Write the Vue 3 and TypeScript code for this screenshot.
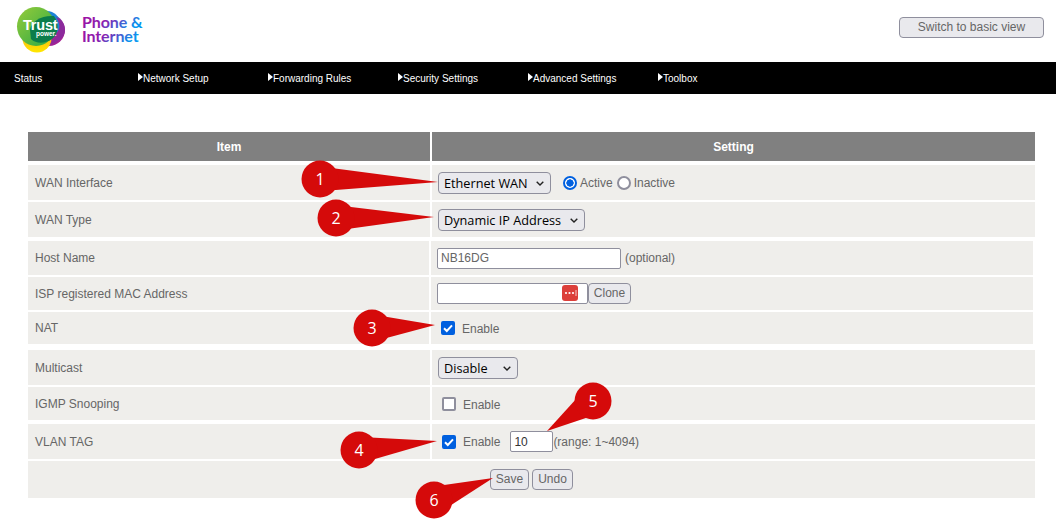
<script setup lang="ts">
interface Callout { n: number; cx: number; cy: number; tx: number; ty: number }
const callouts: Callout[] = [
  { n: 1, cx: 320, cy: 179, tx: 438, ty: 182 },
  { n: 2, cx: 336, cy: 218, tx: 434, ty: 217 },
  { n: 3, cx: 372, cy: 328, tx: 435, ty: 325 },
  { n: 4, cx: 359, cy: 450, tx: 437, ty: 441 },
  { n: 5, cx: 593, cy: 401, tx: 547, ty: 431 },
  { n: 6, cx: 434, cy: 500, tx: 493, ty: 478 },
]
function tail(c: Callout): string {
  const dx = c.tx - c.cx
  const dy = c.ty - c.cy
  const len = Math.hypot(dx, dy)
  const ux = dx / len
  const uy = dy / len
  const bx = c.cx + ux * 13
  const by = c.cy + uy * 13
  const w = 11
  return `${c.tx},${c.ty} ${bx - uy * w},${by + ux * w} ${bx + uy * w},${by - ux * w}`
}
const navItems = ['Network Setup', 'Forwarding Rules', 'Security Settings', 'Advanced Settings', 'Toolbox']
</script>

<template>
  <div class="page">
    <header class="top">
      <svg class="logo" width="150" height="54" viewBox="0 0 150 54">
        <defs>
          <linearGradient id="yel" x1="0" y1="0" x2="0" y2="1"><stop offset="0" stop-color="#f7941d" /><stop offset="1" stop-color="#ffe800" /></linearGradient>
          <linearGradient id="pur" x1="0" y1="0" x2="1" y2="1"><stop offset="0" stop-color="#4b3fb0" /><stop offset="1" stop-color="#b81c8c" /></linearGradient>
          <linearGradient id="grn" x1="0" y1="0" x2="1" y2="1"><stop offset="0" stop-color="#96cc3a" /><stop offset="1" stop-color="#2aa745" /></linearGradient>
          <linearGradient id="wrd" x1="0" y1="0" x2="1" y2="0.4"><stop offset="0" stop-color="#a30fa0" /><stop offset="0.5" stop-color="#8a1fb0" /><stop offset="1" stop-color="#0a96f0" /></linearGradient>
        </defs>
        <circle cx="49" cy="27" r="16" fill="url(#pur)" />
        <circle cx="37" cy="35" r="14.5" fill="url(#yel)" />
        <circle cx="47" cy="21" r="13" fill="#1b83d6" />
        <ellipse cx="36" cy="23.5" rx="19" ry="19.5" fill="url(#grn)" />
        <path d="M30 27 C31 18 42 12 54 13 C59 20 59 31 52 36 C45 41 36 41 31 36 Z" fill="#0c7d4b" />
        <path d="M56 14 C62 22 60 33 52 39 L50 41 C58 40 65 34 65 27 C65 21 61 16 56 14 Z" fill="#8c2a9c" />
        <text x="23" y="27" class="trust">Trust</text>
        <text x="36" y="33" class="power">power.</text>
        <text x="82" y="25" class="word" fill="url(#wrd)">Phone &amp;</text>
        <text x="82" y="39" class="word" fill="url(#wrd)">Internet</text>
      </svg>
      <button class="btn switch" type="button">Switch to basic view</button>
    </header>

    <nav class="nav">
      <span class="nav-status">Status</span>
      <span v-for="item in navItems" :key="item" class="nav-item"><i class="arrow"></i>{{ item }}</span>
    </nav>

    <section class="table">
      <div class="row head">
        <div class="c1">Item</div>
        <div class="c2">Setting</div>
      </div>

      <div class="row r-iface">
        <div class="c1">WAN Interface</div>
        <div class="c2">
          <label class="sel w-iface">
            <select><option>Ethernet WAN</option></select>
            <svg class="chev" width="8" height="5" viewBox="0 0 8 5"><path d="M.7.7L4 4l3.3-3.3" /></svg>
          </label>
          <span class="radio on"></span><span class="t-active">Active</span>
          <span class="radio second"></span><span class="t-active">Inactive</span>
        </div>
      </div>

      <div class="row r-type">
        <div class="c1">WAN Type</div>
        <div class="c2">
          <label class="sel w-type">
            <select><option>Dynamic IP Address</option></select>
            <svg class="chev" width="8" height="5" viewBox="0 0 8 5"><path d="M.7.7L4 4l3.3-3.3" /></svg>
          </label>
        </div>
      </div>

      <div class="row narrow r-host">
        <div class="c1">Host Name</div>
        <div class="c2">
          <input class="inp w-host" value="NB16DG" />
          <span class="after">(optional)</span>
        </div>
      </div>

      <div class="row narrow r-mac">
        <div class="c1">ISP registered MAC Address</div>
        <div class="c2">
          <div class="mac">
            <input class="inp w-mac" />
            <svg class="dots" width="16" height="16" viewBox="0 0 16 16">
              <rect width="16" height="16" rx="3" fill="#dc3f3a" />
              <circle cx="4" cy="8" r="1.1" fill="#fff" />
              <circle cx="7.5" cy="8" r="1.1" fill="#fff" />
              <circle cx="11" cy="8" r="1.1" fill="#fff" />
              <rect x="13.5" y="5" width="1" height="6" fill="#f6c9c7" />
            </svg>
          </div>
          <button class="btn clone" type="button">Clone</button>
        </div>
      </div>

      <div class="row narrow r-nat">
        <div class="c1">NAT</div>
        <div class="c2 chk-cell">
          <span class="check on">
            <svg width="14" height="14" viewBox="0 0 14 14"><path d="M3 7.2l2.8 2.8L11 4.4" /></svg>
          </span>
          <span class="chk-label nudge">Enable</span>
        </div>
      </div>

      <div class="row r-mcast">
        <div class="c1">Multicast</div>
        <div class="c2">
          <label class="sel w-mcast">
            <select><option>Disable</option></select>
            <svg class="chev" width="8" height="5" viewBox="0 0 8 5"><path d="M.7.7L4 4l3.3-3.3" /></svg>
          </label>
        </div>
      </div>

      <div class="row r-igmp">
        <div class="c1">IGMP Snooping</div>
        <div class="c2 chk-cell">
          <span class="check"></span>
          <span class="chk-label nudge">Enable</span>
        </div>
      </div>

      <div class="row r-vlan">
        <div class="c1">VLAN TAG</div>
        <div class="c2 chk-cell">
          <span class="check on">
            <svg width="14" height="14" viewBox="0 0 14 14"><path d="M3 7.2l2.8 2.8L11 4.4" /></svg>
          </span>
          <span class="chk-label">Enable</span>
          <input class="inp w-vlan" value="10" />
          <span class="after-tight">(range: 1~4094)</span>
        </div>
      </div>

      <div class="row r-save">
        <button class="btn save" type="button">Save</button>
        <button class="btn undo" type="button">Undo</button>
      </div>
    </section>

    <svg class="callouts" width="1056" height="519" viewBox="0 0 1056 519">
      <g v-for="c in callouts" :key="c.n">
        <polygon :points="tail(c)" fill="#d50a0a" />
        <circle :cx="c.cx" :cy="c.cy" r="18.5" fill="#d50a0a" />
        <text :x="c.cx" :y="c.cy + 6" text-anchor="middle" class="num">{{ c.n }}</text>
      </g>
    </svg>
  </div>
</template>

<style>
html, body { margin: 0; background: #fff; overflow: hidden; }
</style>

<style scoped>
.page {
  position: relative;
  width: 1056px;
  height: 519px;
  overflow: hidden;
  background: #fff;
  font-family: "Liberation Sans", Arial, sans-serif;
  font-size: 12px;
  color: #666;
}
.top {
  height: 62px;
  display: flex;
  justify-content: space-between;
  align-items: flex-start;
}
.logo { display: block; margin-top: 3px; }
.trust { font: 700 14.5px "Liberation Sans", sans-serif; fill: #fff; letter-spacing: -0.2px; }
.power { font: 700 6.5px "Liberation Sans", sans-serif; fill: #fff; }
.word { font: 700 16px "Lato", sans-serif; letter-spacing: -0.1px; }
.btn {
  box-sizing: border-box;
  height: 21px;
  padding: 0 0 2px;
  background: #e9e9ed;
  border: 1px solid #8f8f9d;
  border-radius: 4px;
  font: 12px "Liberation Sans", Arial, sans-serif;
  color: #666;
  text-align: center;
}
.switch { width: 145px; margin: 17px 12px 0 0; }

.nav {
  height: 32px;
  background: #000;
  color: #fff;
  font-size: 10px;
  display: flex;
  align-items: center;
}
.nav-status { width: 124px; padding-left: 14px; box-sizing: content-box; }
.nav-item { width: 130px; display: flex; align-items: center; }
.arrow {
  width: 0;
  height: 0;
  border-left: 5px solid #fff;
  border-top: 4px solid transparent;
  border-bottom: 4px solid transparent;
  margin-top: -2px;
}

.table { margin: 38px 0 0 28px; width: 1007px; display: flex; flex-direction: column; }
.row { display: flex; gap: 2px; }
.row.narrow { width: 1005px; }
.c1 {
  width: 402px;
  box-sizing: border-box;
  padding-left: 7px;
  background: #efeeeb;
  display: flex;
  align-items: center;
  flex: none;
}
.c2 {
  flex: 1;
  box-sizing: border-box;
  padding-left: 6px;
  background: #efeeeb;
  display: flex;
  align-items: center;
}
.narrow .c1 { width: 401px; }
.head { height: 29px; font-weight: 700; color: #fff; }
.head .c1, .head .c2 { background: #808080; justify-content: center; padding: 0; }

.r-iface { height: 35px; margin-top: 4px; }
.r-type { height: 35px; margin-top: 2px; }
.r-host { height: 34px; margin-top: 4px; }
.r-mac { height: 33px; margin-top: 2px; }
.r-nat { height: 32px; margin-top: 2px; }
.r-mcast { height: 35px; margin-top: 6px; }
.r-igmp { height: 33px; margin-top: 2px; }
.r-vlan { height: 35px; margin-top: 4px; }
.r-save {
  height: 37px;
  margin-top: 2px;
  background: #efeeeb;
  align-items: center;
  padding-left: 462px;
  gap: 3px;
}

.sel { position: relative; display: block; height: 22px; flex: none; }
.sel select {
  appearance: none;
  box-sizing: border-box;
  width: 100%;
  height: 22px;
  margin: 0;
  padding: 1px 0 0 5px;
  background: #e9e9ed;
  border: 1px solid #8f8f9d;
  border-radius: 4px;
  font: 12.7px "Open Sans", sans-serif;
  color: #000;
}
.chev { position: absolute; top: 9px; right: 7px; }
.chev path { fill: none; stroke: #222; stroke-width: 1.4; }
.w-iface { width: 113px; }
.w-type { width: 147px; }
.w-mcast { width: 80px; }

.radio {
  box-sizing: border-box;
  width: 14px;
  height: 14px;
  border-radius: 50%;
  border: 2px solid #8f8f9d;
  background: #fff;
  margin-left: 12px;
  flex: none;
}
.radio.on { border-color: #0060df; background: radial-gradient(circle, #0060df 0 3.4px, #fff 3.9px); }
.radio.second { margin-left: 4px; }
.t-active { margin-left: 3px; }

.inp {
  box-sizing: border-box;
  height: 21px;
  margin: 0;
  padding: 0 3px;
  background: #fff;
  border: 1px solid #8f8f9d;
  border-radius: 2px;
  font: 12px "Liberation Sans", Arial, sans-serif;
  color: #666;
  outline: none;
}
.w-host { width: 184px; }
.w-mac { width: 151px; display: block; }
.w-vlan { width: 43px; margin-left: 10px; color: #333; }
.after { margin-left: 4px; }
.after-tight { margin-left: 0; }
.mac { position: relative; flex: none; }
.dots { position: absolute; top: 2px; right: 10px; }
.clone { width: 43px; flex: none; }

.chk-cell { padding-left: 10px; }
.check {
  box-sizing: border-box;
  width: 14px;
  height: 14px;
  border: 2px solid #8f8f9d;
  border-radius: 2px;
  background: #fff;
  flex: none;
  position: relative;
}
.check.on { background: #0060df; border-color: #0060df; }
.check svg { position: absolute; left: -2px; top: -2px; }
.check path { fill: none; stroke: #fff; stroke-width: 2; }
.chk-label { margin-left: 7px; }
.nudge { padding-top: 2px; }

.save { width: 39px; }
.undo { width: 41px; }

.callouts { position: absolute; left: 0; top: 0; pointer-events: none; }
.num { font: 16px "Open Sans", sans-serif; fill: #fff; }
</style>
